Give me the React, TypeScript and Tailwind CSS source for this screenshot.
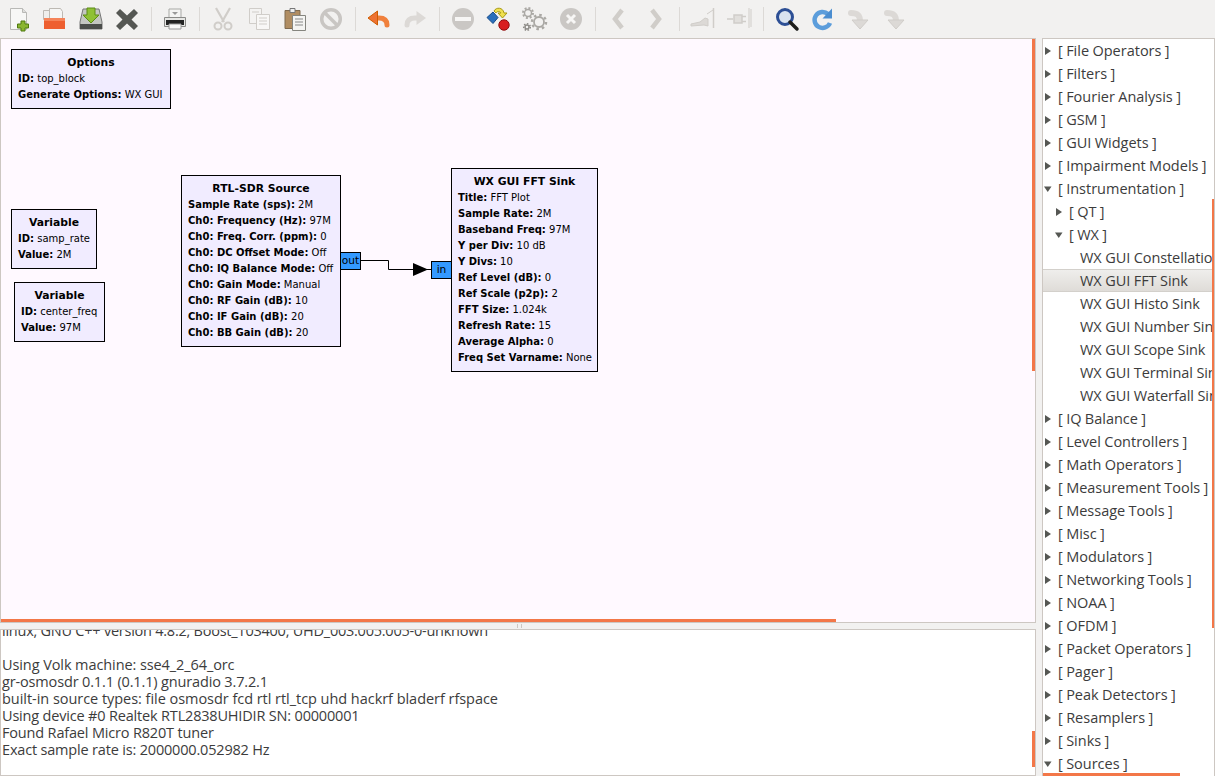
import type { ReactNode } from "react";

const UI_FONT = "font-['Open_Sans','Noto_Sans',sans-serif]";
const BLOCK_FONT = "font-['DejaVu_Sans',sans-serif]";

type Param = [string, string];

interface BlockProps {
  title: string;
  params: Param[];
  className: string;
}

function Block({ title, params, className }: BlockProps) {
  return (
    <div className={`absolute border border-black bg-[#f1ecff] px-[6px] pt-[5px] text-[10px] leading-[16px] text-black ${className}`}>
      <div className="text-center text-[10.8px] font-bold">{title}</div>
      {params.map(([k, v]) => (
        <div key={k} className="whitespace-nowrap">
          <span className="font-bold">{k}:</span> {v}
        </div>
      ))}
    </div>
  );
}

function Sep() {
  return <div className="mx-[5px] h-[24px] w-[2px] border-r border-[#dcd9d6]" />;
}

function Btn({ children }: { children: ReactNode }) {
  return (
    <div className="flex h-[38px] w-[36px] items-center justify-center">
      <svg width="24" height="24" viewBox="0 0 24 24" className="overflow-visible">
        {children}
      </svg>
    </div>
  );
}

const DIS = "#d0cdc9";
const DIS_FILL = "#dcd9d6";

function Toolbar() {
  return (
    <div className="flex h-[38px] items-center bg-[#f2f1f0] pl-px">
      <Btn>
        <path d="M3.500 1.500h12l4 4v17h-16z" fill="#f7f7f6" stroke="#b9b9b6" />
        <path d="M15.500 1.500v4h4" fill="#dededc" stroke="#b9b9b6" />
        <path d="M14 14h4v3h3.500v4H18v3h-4v-3h-3.500v-4H14z" fill="#8ab530" stroke="#4f7a10" />
      </Btn>
      <Btn>
        <path d="M0.500 3.500h9v9h-9z" fill="#efeeec" stroke="#bdb9b3" />
        <path d="M6.500 1.500h11l2 3v8h-13z" fill="#f6f6f5" stroke="#bdb9b3" />
        <path d="M1 11h21v11H1z" fill="#ee5f30" />
        <path d="M1 11h21v3H1z" fill="#f5845a" />
      </Btn>
      <Btn>
        <path d="M1 15l3-13h16l3 13v7H1z" fill="#c4c6c2" stroke="#777" />
        <path d="M1 17h22v5H1z" fill="#4b4d4b" />
        <path d="M8 1h8v7h4l-8 8-8-8h4z" fill="#8fc134" stroke="#5d8c14" />
      </Btn>
      <Btn>
        <path d="M5 2l7 6.500L19 2l4 4-6.500 6.500L23 19l-4 4-7-6.500L5 23l-4-4 6.500-6.500L1 6z" fill="#555753" />
      </Btn>
      <Sep />
      <Btn>
        <path d="M6 2h12v9H6z" fill="#f4f4f3" stroke="#a9a9a6" />
        <path d="M1.500 10.500h21v9h-21z" fill="#e6e6e4" stroke="#8a8a88" />
        <path d="M3 13h18v5H3z" fill="#232323" />
        <path d="M6 17h12v5H6z" fill="#fafafa" stroke="#999" />
        <path d="M9 5h6l-3 3z" fill="#999" />
      </Btn>
      <Sep />
      <Btn>
        <path d="M5 1l8 14M19 1l-8 14" fill="none" stroke={DIS} strokeWidth="2.200" />
        <circle cx="7" cy="19" r="3.500" fill="none" stroke={DIS} strokeWidth="2" />
        <circle cx="17" cy="19" r="3.500" fill="none" stroke={DIS} strokeWidth="2" />
      </Btn>
      <Btn>
        <path d="M2.500 1.500h12v15h-12z" fill="#f4f3f2" stroke={DIS} />
        <path d="M9.500 7.500h13v15h-13z" fill="#f8f7f6" stroke={DIS} />
        <path d="M12 11h8M12 14h8M12 17h8M5 5h7" stroke={DIS} />
      </Btn>
      <Btn>
        <path d="M2 3.500h15v18H2z" fill="#b08d62" stroke="#7f6a4f" />
        <path d="M7 1.500h5v4H7z" fill="#eee" stroke="#777" />
        <path d="M9.500 8.500h13v15h-13z" fill="#f4f4f2" stroke="#85857f" />
        <path d="M12 12h8M12 15h8M12 18h8" stroke="#888" />
      </Btn>
      <Btn>
        <circle cx="12" cy="12" r="9.300" fill="none" stroke="#c9c6c3" strokeWidth="3.500" />
        <path d="M6 6l12 12" stroke="#c9c6c3" strokeWidth="3.500" />
      </Btn>
      <Sep />
      <Btn>
        <path d="M9 11h3c5 0 8 2 8 7" fill="none" stroke="#f0803c" strokeWidth="5" strokeLinecap="round" />
        <path d="M10.500 4L1 11l9.500 7z" fill="#ee7232" stroke="#ce5c00" strokeLinejoin="round" />
      </Btn>
      <Btn>
        <path d="M15 11h-3c-5 0-8 2-8 7" fill="none" stroke={DIS_FILL} strokeWidth="5" strokeLinecap="round" />
        <path d="M13.500 4L23 11l-9.500 7z" fill={DIS_FILL} />
      </Btn>
      <Sep />
      <Btn>
        <circle cx="12" cy="12" r="11" fill="#cac7c4" />
        <path d="M4 10h16v4H4z" fill="#f7f6f5" />
      </Btn>
      <Btn>
        <path d="M0 10.500l6-5.500 5 5.500-5 6z" fill="#2a6fbb" stroke="#174a88" />
        <path d="M7 4c2-4 9-4 10 2h3l-4.500 5-4.500-5h3c-1-2-4-2-5 0z" fill="#f0e050" stroke="#a89a10" />
        <circle cx="17" cy="18" r="5.200" fill="#d81f1f" stroke="#8f0f0f" />
      </Btn>
      <Btn>
        <circle cx="5" cy="6" r="3.500" fill="none" stroke="#aaa8a4" strokeWidth="1.500" />
        <circle cx="5" cy="6" r="5" fill="none" stroke="#aaa8a4" strokeWidth="2" strokeDasharray="2 1.900" />
        <circle cx="16" cy="15" r="5" fill="none" stroke="#aaa8a4" strokeWidth="1.800" />
        <circle cx="16" cy="15" r="7" fill="none" stroke="#aaa8a4" strokeWidth="2.500" strokeDasharray="2.500 3" />
        <circle cx="4" cy="20" r="2" fill="none" stroke="#8e8c88" strokeWidth="1.500" />
        <circle cx="4" cy="20" r="3.300" fill="none" stroke="#8e8c88" strokeWidth="1.500" strokeDasharray="1.500 1.500" />
      </Btn>
      <Btn>
        <circle cx="12" cy="12" r="11" fill="#cac7c4" />
        <path d="M8 8l8 8M16 8l-8 8" stroke="#f7f6f5" strokeWidth="3" />
      </Btn>
      <Sep />
      <Btn>
        <path d="M15 3L8 12l7 9" fill="none" stroke={DIS} strokeWidth="4.500" />
      </Btn>
      <Btn>
        <path d="M9 3l7 9-7 9" fill="none" stroke={DIS} strokeWidth="4.500" />
      </Btn>
      <Sep />
      <Btn>
        <path d="M0 17l9-2 5-4 3 1v7l-4-1-13 1z" fill={DIS_FILL} stroke={DIS} />
        <path d="M22.500 1v20" stroke={DIS} strokeWidth="1.500" />
        <path d="M16 7l6-4" stroke={DIS} />
      </Btn>
      <Btn>
        <path d="M0 12h6M7 8h8v8H7zM15 9.500h4M15 14.500h4" fill="#e1dfdc" stroke={DIS} strokeWidth="1.500" />
        <path d="M22 1v20M24 2v18" stroke={DIS} />
      </Btn>
      <Sep />
      <Btn>
        <circle cx="10" cy="10" r="7.500" fill="#d9e3f0" stroke="#2d4f95" strokeWidth="3" />
        <path d="M15 15l7 7" stroke="#1d1d1b" strokeWidth="3.500" strokeLinecap="round" />
      </Btn>
      <Btn>
        <path d="M19 16a8 8 0 1 1-2-9" fill="none" stroke="#5c9ddb" strokeWidth="4.500" />
        <path d="M21 1.500v10h-9.500z" fill="#4a8dd0" />
      </Btn>
      <Btn>
        <path d="M4 6c6 0 9 2 9 8" fill="none" stroke={DIS_FILL} strokeWidth="6" strokeLinecap="round" />
        <path d="M5 13h16l-8 9z" fill={DIS_FILL} stroke={DIS} strokeLinejoin="round" />
      </Btn>
      <Btn>
        <path d="M4 6c6 0 9 2 9 8" fill="none" stroke={DIS_FILL} strokeWidth="6" strokeLinecap="round" />
        <path d="M5 13h16l-8 9z" fill={DIS_FILL} stroke={DIS} strokeLinejoin="round" />
      </Btn>
    </div>
  );
}

function Arrow({ open }: { open?: boolean }) {
  return (
    <svg width="8" height="8" viewBox="0 0 8 8" className="shrink-0">
      {open ? <path d="M0 1.500h7.500L3.750 7z" fill="#555753" /> : <path d="M1 0v8l6-4z" fill="#555753" />}
    </svg>
  );
}

type Row = { label: string; depth: 0 | 1 | 2; open?: boolean; leaf?: boolean; selected?: boolean };

const rows: Row[] = [
  { label: "File Operators", depth: 0 },
  { label: "Filters", depth: 0 },
  { label: "Fourier Analysis", depth: 0 },
  { label: "GSM", depth: 0 },
  { label: "GUI Widgets", depth: 0 },
  { label: "Impairment Models", depth: 0 },
  { label: "Instrumentation", depth: 0, open: true },
  { label: "QT", depth: 1 },
  { label: "WX", depth: 1, open: true },
  { label: "WX GUI Constellation Sink", depth: 2, leaf: true },
  { label: "WX GUI FFT Sink", depth: 2, leaf: true, selected: true },
  { label: "WX GUI Histo Sink", depth: 2, leaf: true },
  { label: "WX GUI Number Sink", depth: 2, leaf: true },
  { label: "WX GUI Scope Sink", depth: 2, leaf: true },
  { label: "WX GUI Terminal Sink", depth: 2, leaf: true },
  { label: "WX GUI Waterfall Sink", depth: 2, leaf: true },
  { label: "IQ Balance", depth: 0 },
  { label: "Level Controllers", depth: 0 },
  { label: "Math Operators", depth: 0 },
  { label: "Measurement Tools", depth: 0 },
  { label: "Message Tools", depth: 0 },
  { label: "Misc", depth: 0 },
  { label: "Modulators", depth: 0 },
  { label: "Networking Tools", depth: 0 },
  { label: "NOAA", depth: 0 },
  { label: "OFDM", depth: 0 },
  { label: "Packet Operators", depth: 0 },
  { label: "Pager", depth: 0 },
  { label: "Peak Detectors", depth: 0 },
  { label: "Resamplers", depth: 0 },
  { label: "Sinks", depth: 0 },
  { label: "Sources", depth: 0, open: true },
];

function TreeRow({ row }: { row: Row }) {
  if (row.leaf) {
    const bg = row.selected ? "bg-gradient-to-b from-[#efeeec] to-[#dfdcd8] border-y border-[#d3d0cb]" : "";
    return (
      <div className={`flex h-[23px] items-center whitespace-nowrap pl-[37px] tracking-[-0.1px] ${bg}`}>{row.label}</div>
    );
  }
  return (
    <div className={`flex h-[23px] items-center whitespace-nowrap ${row.depth === 1 ? "pl-[12px]" : "pl-px"}`}>
      <Arrow open={row.open} />
      <span className="ml-[6px] [word-spacing:-0.4px]">[ {row.label} ]</span>
    </div>
  );
}

const logLines: [string, string][] = [
  ["linux, GNU C++ version 4.8.2, Boost_103400, UHD_003.005.005-0-unknown", "tracking-[-0.24px]"],
  ["\u00a0", ""],
  ["Using Volk machine: sse4_2_64_orc", "tracking-[-0.09px]"],
  ["gr-osmosdr 0.1.1 (0.1.1) gnuradio 3.7.2.1", "tracking-[-0.15px]"],
  ["built-in source types: file osmosdr fcd rtl rtl_tcp uhd hackrf bladerf rfspace", "tracking-[-0.04px]"],
  ["Using device #0 Realtek RTL2838UHIDIR SN: 00000001", "tracking-[-0.18px]"],
  ["Found Rafael Micro R820T tuner", "tracking-[-0.17px]"],
  ["Exact sample rate is: 2000000.052982 Hz", "tracking-[-0.18px]"],
];

export default function App() {
  return (
    <div className={`flex h-[776px] w-[1215px] flex-col overflow-hidden bg-[#f2f1f0] text-[#3c3c3c] ${UI_FONT}`}>
      <Toolbar />
      <div className="flex min-h-0 flex-1">
        <div className="flex w-[1036px] flex-col">
          <div className={`relative h-[585px] overflow-hidden border border-[#cdc7c2] bg-[#fff9ff] ${BLOCK_FONT}`}>
            <Block
              title="Options"
              className="left-[10px] top-[10px] h-[60px] w-[160px]"
              params={[["ID", "top_block"], ["Generate Options", "WX GUI"]]}
            />
            <Block
              title="Variable"
              className="left-[10px] top-[170px] h-[60px] w-[86px]"
              params={[["ID", "samp_rate"], ["Value", "2M"]]}
            />
            <Block
              title="Variable"
              className="left-[13px] top-[243px] h-[60px] w-[91px]"
              params={[["ID", "center_freq"], ["Value", "97M"]]}
            />
            <Block
              title="RTL-SDR Source"
              className="left-[180px] top-[136px] h-[172px] w-[160px]"
              params={[
                ["Sample Rate (sps)", "2M"],
                ["Ch0: Frequency (Hz)", "97M"],
                ["Ch0: Freq. Corr. (ppm)", "0"],
                ["Ch0: DC Offset Mode", "Off"],
                ["Ch0: IQ Balance Mode", "Off"],
                ["Ch0: Gain Mode", "Manual"],
                ["Ch0: RF Gain (dB)", "10"],
                ["Ch0: IF Gain (dB)", "20"],
                ["Ch0: BB Gain (dB)", "20"],
              ]}
            />
            <Block
              title="WX GUI FFT Sink"
              className="left-[450px] top-[129px] h-[204px] w-[147px]"
              params={[
                ["Title", "FFT Plot"],
                ["Sample Rate", "2M"],
                ["Baseband Freq", "97M"],
                ["Y per Div", "10 dB"],
                ["Y Divs", "10"],
                ["Ref Level (dB)", "0"],
                ["Ref Scale (p2p)", "2"],
                ["FFT Size", "1.024k"],
                ["Refresh Rate", "15"],
                ["Average Alpha", "0"],
                ["Freq Set Varname", "None"],
              ]}
            />
            <div className="absolute left-[339px] top-[213px] flex h-[18px] w-[21px] items-center justify-center border border-black bg-[#3399ff] text-[10.67px] text-black">
              out
            </div>
            <div className="absolute left-[430px] top-[222px] flex h-[18px] w-[21px] items-center justify-center border border-black bg-[#3399ff] text-[10.67px] text-black">
              in
            </div>
            <svg className="absolute left-[360px] top-[216px]" width="72" height="22" viewBox="0 0 72 22">
              <path d="M0 5.500h27.500v9H71" fill="none" stroke="#000" />
              <path d="M52 8l15 6.500L52 21z" fill="#000" />
            </svg>
            <div className="absolute bottom-0 left-0 h-[3px] w-[835px] bg-[#f37748]" />
            <div className="absolute right-0 top-0 h-[332px] w-[3px] bg-[#f37748]" />
          </div>
          <div className="flex h-[6px] items-center justify-center pl-[2px]">
            <div className="h-[4px] w-[5px] border-x border-[#cdc7c2]" />
          </div>
          <div className="relative h-[147px] overflow-hidden border border-[#cdc7c2] bg-white pl-px text-[14.5px] leading-[17px] text-[#3c3c3c]">
            <div className="-mt-[8px]">
              {logLines.map(([text, cls], i) => (
                <div key={i} className={`whitespace-nowrap ${cls}`}>
                  {text}
                </div>
              ))}
            </div>
            <div className="absolute right-0 top-[101px] h-[36px] w-[3px] bg-[#f37748]" />
          </div>
        </div>
        <div className="w-[6px]" />
        <div className="relative h-[738px] w-[173px] overflow-hidden border-x border-t border-[#cdc7c2] bg-white text-[14.5px]">
          {rows.map((r) => (
            <TreeRow key={r.label} row={r} />
          ))}
          <div className="absolute bottom-0 left-0 h-[3px] w-[137px] bg-[#f37748]" />
          <div className="absolute -right-px top-[160px] h-[429px] w-[3px] bg-[#f37748]" />
        </div>
      </div>
    </div>
  );
}
